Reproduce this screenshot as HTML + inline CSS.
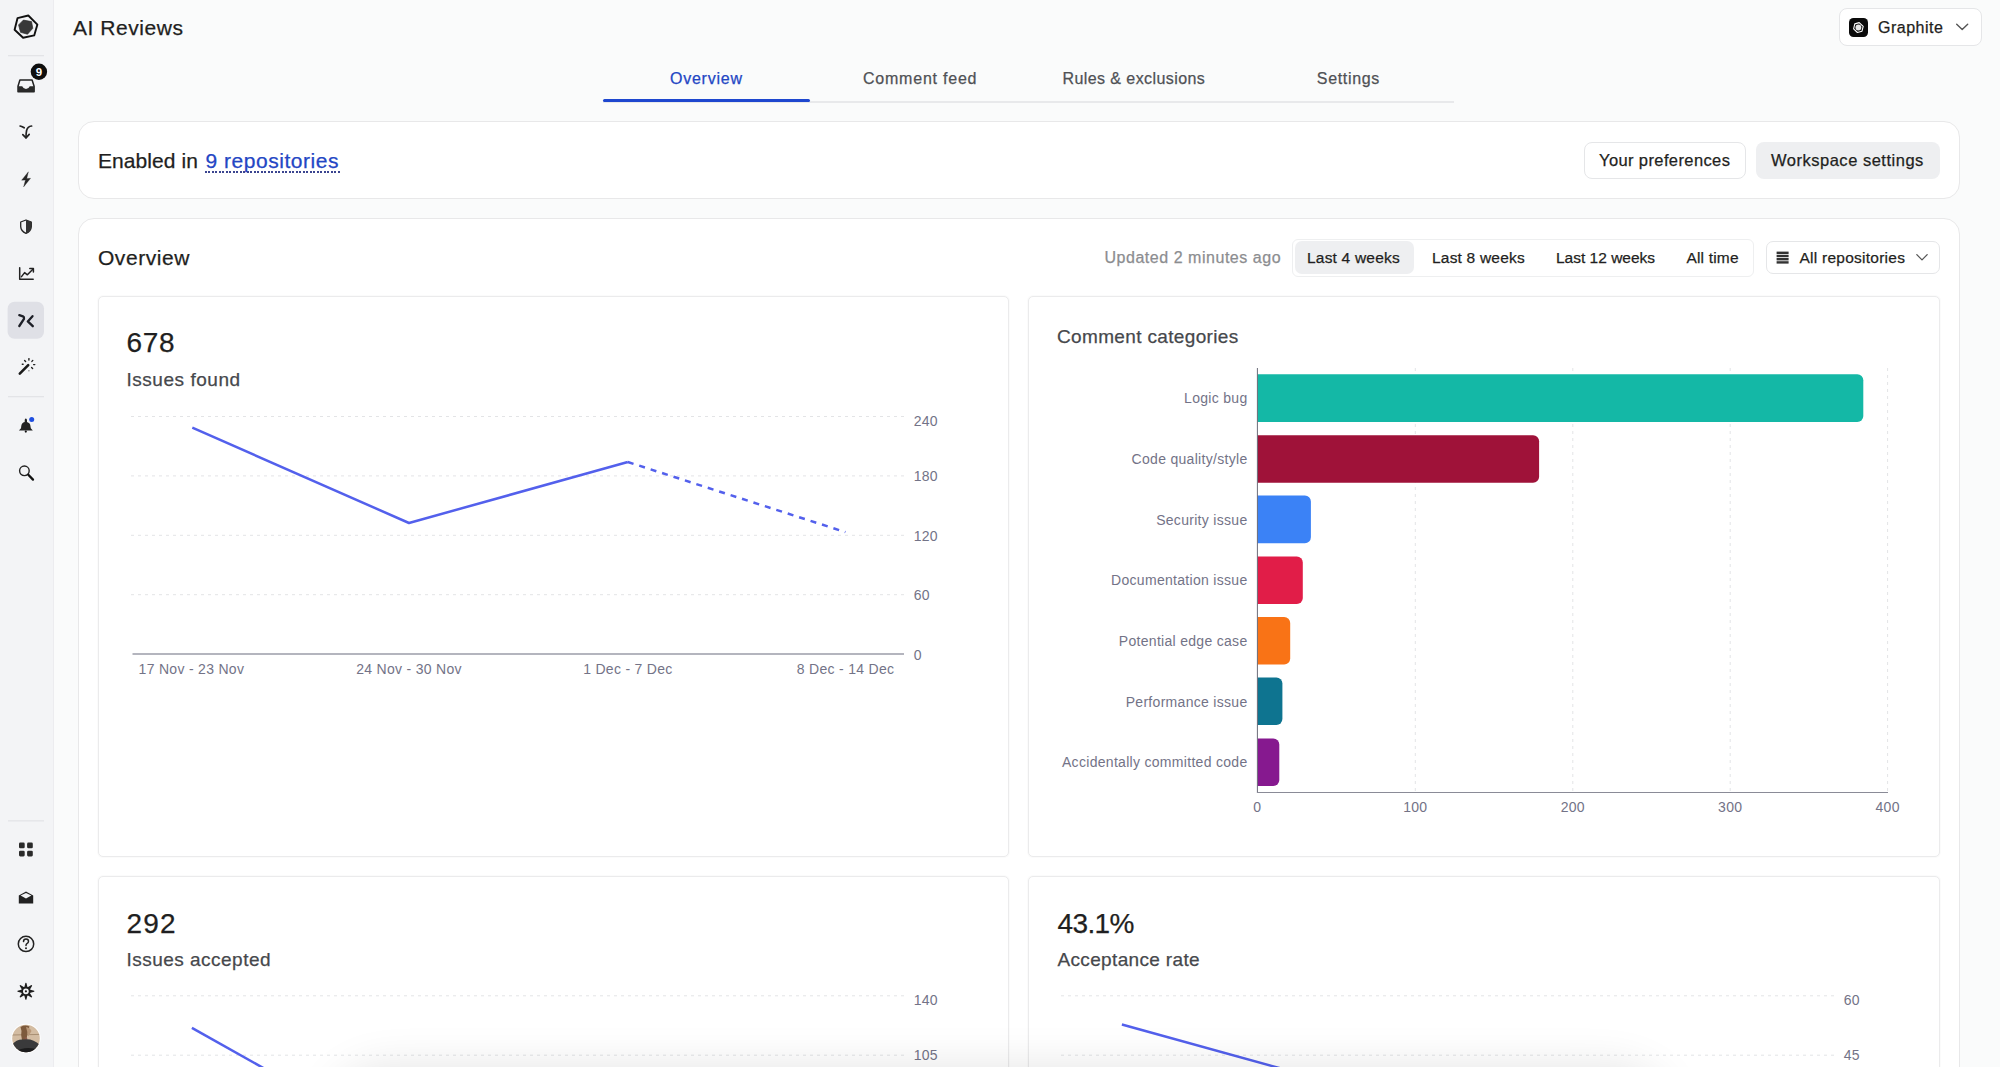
<!DOCTYPE html>
<html>
<head>
<meta charset="utf-8">
<style>
html,body{margin:0;padding:0;}
body{width:2000px;height:1067px;overflow:hidden;position:relative;background:#fafbfb;font-family:"Liberation Sans",sans-serif;color:#1f2124;}
.a{position:absolute;}
.t{position:absolute;white-space:nowrap;line-height:1;-webkit-text-stroke:0.25px currentColor;}
#side{left:0;top:0;width:53px;height:1067px;background:#f3f4f6;border-right:1.5px solid #ececef;}
.card{position:absolute;background:#fff;border:1px solid #e8e8e9;box-sizing:border-box;}
.btn{position:absolute;box-sizing:border-box;border-radius:8px;}
</style>
</head>
<body>
<!-- SIDEBAR -->
<div id="side" class="a"></div>
<svg class="a" style="left:0;top:0;" width="54" height="1067" viewBox="0 0 54 1067">
  <!-- logo -->
  <path d="M28.3 15.5 L37.4 24.6 L34.2 35.4 L23.1 37.8 L14.6 29.7 L17.5 18.2 Z" fill="none" stroke="#111" stroke-width="1.9" stroke-linejoin="round"/>
  <path d="M23.4 20.1 L31.5 21.6 L32.8 28.3 L27.5 34.2 L20.5 32.3 L18.6 24.9 Z" fill="#383838" stroke="#2e2e2e" stroke-width="0.7" stroke-linejoin="round"/>
  <!-- divider -->
  <rect x="8" y="55" width="36" height="1.3" fill="#e3e4e7"/>
  <!-- inbox -->
  <path d="M19.9 80 L32.1 80 L34.1 86.2 L34.1 91.7 L18 91.7 L18 86.2 Z" fill="none" stroke="#222" stroke-width="1.5" stroke-linejoin="round"/>
  <path d="M18 86.2 L22.2 86.2 Q23.5 89 26 89 Q28.5 89 29.8 86.2 L34.1 86.2 L34.1 91.7 L18 91.7 Z" fill="#2a2a2a"/>
  <!-- badge -->
  <circle cx="38.9" cy="71.7" r="9.3" fill="#f3f4f6"/>
  <circle cx="38.9" cy="71.7" r="8.2" fill="#0e0e0e"/>
  <text x="38.9" y="76" text-anchor="middle" font-family="Liberation Sans" font-weight="bold" font-size="11.5" fill="#fff">9</text>
  <!-- merge -->
  <path d="M20.1 126 Q22.5 126.6 24.2 127.8" fill="none" stroke="#222" stroke-width="1.7" stroke-linecap="round"/>
  <path d="M31.6 126 Q27.6 126.4 26.6 130.5 Q26 133 26 137.6" fill="none" stroke="#222" stroke-width="1.7" stroke-linecap="round"/>
  <path d="M22.8 134.6 L26 137.9 L29.2 134.4" fill="none" stroke="#222" stroke-width="1.7" stroke-linecap="round" stroke-linejoin="round"/>
  <!-- bolt -->
  <path d="M28.4 171.8 L21.6 180.2 L25.4 180.1 L23.6 186.9 L30.6 178.3 L26.8 178.4 Z" fill="#262626" stroke="#262626" stroke-width="0.3" stroke-linejoin="round"/>
  <!-- shield -->
  <path d="M26 220 L31.3 222 L31.3 226.6 Q31.1 231 26 233.3 Q20.9 231 20.7 226.6 L20.7 222 Z" fill="none" stroke="#262626" stroke-width="1.3" stroke-linejoin="round"/>
  <path d="M26 220 L31.3 222 L31.3 226.6 Q31.1 231 26 233.3 Z" fill="#333"/>
  <!-- chart -->
  <path d="M19.7 267.8 L19.7 279.2 L33.2 279.2" fill="none" stroke="#222" stroke-width="1.5" stroke-linecap="round" stroke-linejoin="round"/>
  <path d="M21.5 276.6 L24.6 272.6 L27.4 274.8 L32.6 269.4" fill="none" stroke="#222" stroke-width="1.5" stroke-linecap="round" stroke-linejoin="round"/>
  <path d="M29.8 268.4 L33.4 268.4 L33.4 272" fill="none" stroke="#222" stroke-width="1.5" stroke-linecap="round" stroke-linejoin="round"/>
  <!-- active -->
  <rect x="7.6" y="301.8" width="36.4" height="37" rx="7" fill="#dfe0e6"/>
  <path d="M19.3 315.1 L22.9 316.3 Q24.4 317.2 24 318.8 L19.3 326" fill="none" stroke="#1d1f27" stroke-width="2.3" stroke-linecap="round" stroke-linejoin="round"/>
  <path d="M32.5 316.2 L27.8 321.4 L32.8 326.2" fill="none" stroke="#1d1f27" stroke-width="2.3" stroke-linecap="round" stroke-linejoin="round"/>
  <!-- wand -->
  <path d="M19.8 373.6 L28.2 365.2" fill="none" stroke="#1a1a1a" stroke-width="2.6" stroke-linecap="round"/>
  <path d="M28.9 358.6 L28.9 360" stroke="#222" stroke-width="1.4" stroke-linecap="round"/>
  <path d="M24.6 360.4 L25.6 361.4" stroke="#222" stroke-width="1.4" stroke-linecap="round"/>
  <path d="M32.8 360.4 L31.9 361.4" stroke="#222" stroke-width="1.4" stroke-linecap="round"/>
  <path d="M22.3 364.3 L23.1 364.3" stroke="#222" stroke-width="1.4" stroke-linecap="round"/>
  <path d="M33.6 364.6 L34.8 364.6" stroke="#222" stroke-width="1.4" stroke-linecap="round"/>
  <path d="M31.6 367.4 L32.6 368.4" stroke="#222" stroke-width="1.4" stroke-linecap="round"/>
  <circle cx="28.9" cy="370.8" r="0.8" fill="#888"/>
  <!-- divider -->
  <rect x="8" y="396" width="36" height="1.3" fill="#e3e4e7"/>
  <!-- bell -->
  <path d="M25.8 418.6 Q27 418.8 27 420.6 L27 422 Q30.3 423 30.5 426.4 L30.8 428.3 L32.8 430.6 L18.9 430.6 L21 428.3 L21.2 426.4 Q21.5 422.6 24.7 422 L24.7 420.6 Q24.7 418.8 25.8 418.6 Z" fill="#222"/>
  <circle cx="25.8" cy="431.6" r="1.1" fill="#111"/>
  <circle cx="31.7" cy="419.6" r="3.6" fill="#f3f4f6"/>
  <circle cx="31.7" cy="419.6" r="2.5" fill="#1f4fe0"/>
  <!-- search -->
  <circle cx="24.4" cy="470.8" r="4.8" fill="none" stroke="#222" stroke-width="1.4"/>
  <path d="M28.3 474.7 L33 479.6" stroke="#111" stroke-width="2.3" stroke-linecap="round"/>
  <!-- divider bottom -->
  <rect x="8" y="820.2" width="36" height="1.3" fill="#e3e4e7"/>
  <!-- grid -->
  <rect x="19" y="842.6" width="5.7" height="5.6" rx="1.3" fill="#2a2a2a"/>
  <rect x="27.1" y="842.6" width="5.7" height="5.6" rx="1.3" fill="#2a2a2a"/>
  <rect x="19" y="850.8" width="5.7" height="5.6" rx="1.3" fill="#2a2a2a"/>
  <rect x="27.1" y="850.8" width="5.7" height="5.6" rx="1.3" fill="#2a2a2a"/>
  <!-- mail open -->
  <path d="M18.8 895.4 L26 891.4 L33.2 895.4 L33.2 903.4 L18.8 903.4 Z" fill="#222"/>
  <path d="M20.6 895.6 L26 892.9 L31.4 895.6 L26 898.6 Z" fill="#f3f4f6"/>
  <!-- help -->
  <circle cx="26" cy="943.9" r="7.7" fill="none" stroke="#222" stroke-width="1.5"/>
  <path d="M23.5 941.6 Q23.6 939 26 939 Q28.5 939 28.5 941.3 Q28.5 942.8 26.9 943.6 Q26 944.1 26 945.4" fill="none" stroke="#222" stroke-width="1.5" stroke-linecap="round"/>
  <circle cx="26" cy="948.2" r="1" fill="#222"/>
  <!-- gear -->
  <g transform="translate(25.9 991.3)" fill="#1e1e1e">
    <path d="M-1.7 -3.6 L-0.55 -8.3 Q0 -8.7 0.55 -8.3 L1.7 -3.6 Z" transform="rotate(0)"/><path d="M-1.7 -3.6 L-0.55 -8.3 Q0 -8.7 0.55 -8.3 L1.7 -3.6 Z" transform="rotate(45)"/><path d="M-1.7 -3.6 L-0.55 -8.3 Q0 -8.7 0.55 -8.3 L1.7 -3.6 Z" transform="rotate(90)"/><path d="M-1.7 -3.6 L-0.55 -8.3 Q0 -8.7 0.55 -8.3 L1.7 -3.6 Z" transform="rotate(135)"/><path d="M-1.7 -3.6 L-0.55 -8.3 Q0 -8.7 0.55 -8.3 L1.7 -3.6 Z" transform="rotate(180)"/><path d="M-1.7 -3.6 L-0.55 -8.3 Q0 -8.7 0.55 -8.3 L1.7 -3.6 Z" transform="rotate(225)"/><path d="M-1.7 -3.6 L-0.55 -8.3 Q0 -8.7 0.55 -8.3 L1.7 -3.6 Z" transform="rotate(270)"/><path d="M-1.7 -3.6 L-0.55 -8.3 Q0 -8.7 0.55 -8.3 L1.7 -3.6 Z" transform="rotate(315)"/>
    <circle r="3.75" fill="none" stroke="#1e1e1e" stroke-width="1.7"/>
    <circle r="1.1"/>
  </g>
  <!-- avatar -->
  <defs>
    <clipPath id="avc"><circle cx="26" cy="1038.5" r="13.8"/></clipPath>
    <linearGradient id="avbg" x1="0" y1="0" x2="1" y2="1">
      <stop offset="0" stop-color="#d2b48e"/>
      <stop offset="1" stop-color="#a98461"/>
    </linearGradient>
  </defs>
  <circle cx="26" cy="1038.5" r="14.7" fill="#fff"/>
  <g clip-path="url(#avc)">
    <rect x="12" y="1024" width="28" height="29" fill="#d3bca2"/>
    <path d="M12 1035 L40 1034.4" stroke="#a48a6e" stroke-width="0.9"/>
    <path d="M20.5 1027 Q25 1024.5 29.5 1026.5 Q28 1030 27.5 1034 Q27 1038 25.5 1041 L22 1040 Q20.5 1035 21.5 1031 Z" fill="#7d5a3c"/>
    <path d="M26 1027 Q30 1027.5 31.5 1031 Q30 1034 28 1036.5 Q27.5 1032 26 1027 Z" fill="#b99878"/>
    <path d="M24.5 1037 Q26.5 1036.5 27.5 1039 L25 1041 Z" fill="#8a5a4a"/>
    <path d="M10 1048 Q15 1038.5 24 1039.5 Q33 1038 41 1046 L41 1054 L10 1054 Z" fill="#3a3a3b"/>
    <path d="M14 1052 Q26 1045 39 1050 L39 1054 L14 1054 Z" fill="#1c1c1d"/>
  </g>
</svg>

<!-- TITLE -->
<div class="t" style="left:73px;top:16.7px;font-size:21px;letter-spacing:0.55px;color:#1f1f21;">AI Reviews</div>

<!-- GRAPHITE DROPDOWN -->
<div class="btn" style="left:1839px;top:8px;width:143px;height:38px;border:1px solid #e5e6e8;background:#fff;"></div>
<svg class="a" style="left:1849px;top:17.5px;" width="19" height="19" viewBox="0 0 19 19">
  <rect x="0" y="0" width="19" height="19" rx="4.5" fill="#0b0b0b"/>
  <path d="M10.2 4.6 L14.2 8.3 L13 13.2 L8.4 14.5 L4.6 10.8 L5.8 5.9 Z" fill="none" stroke="#fff" stroke-width="1.1" stroke-linejoin="round"/>
  <circle cx="9.4" cy="9.5" r="2.9" fill="#e8e8e8"/>
</svg>
<svg class="a" style="left:1954px;top:22px;" width="16" height="10" viewBox="0 0 16 10">
  <path d="M2.7 2.3 L8.2 7.6 L13.7 2.3" fill="none" stroke="#555" stroke-width="1.4" stroke-linecap="round" stroke-linejoin="round"/>
</svg>
<div class="t" style="left:1878px;top:20.2px;font-size:16px;letter-spacing:0.5px;color:#1f1f21;">Graphite</div>

<!-- TABS -->
<div class="a" style="left:603px;top:101px;width:851px;height:2px;background:#e8e9eb;"></div>
<div class="a" style="left:603px;top:99px;width:207px;height:3px;border-radius:2px;background:#1e47cf;"></div>
<div class="t" style="left:670px;top:71.2px;font-size:16px;letter-spacing:0.75px;color:#2346c4;">Overview</div>
<div class="t" style="left:863px;top:71.2px;font-size:16px;letter-spacing:0.78px;color:#4f5155;">Comment feed</div>
<div class="t" style="left:1062.5px;top:71.2px;font-size:16px;letter-spacing:0.42px;color:#4f5155;">Rules &amp; exclusions</div>
<div class="t" style="left:1316.8px;top:71.2px;font-size:16px;letter-spacing:0.67px;color:#4f5155;">Settings</div>

<!-- ENABLED CARD -->
<div class="card" style="left:78px;top:121px;width:1882px;height:78px;border-radius:16px;"></div>
<div class="t" style="left:98px;top:150.1px;font-size:21px;letter-spacing:0.08px;color:#1f1f21;">Enabled in</div>
<div class="t" style="left:205.5px;top:150.1px;font-size:21px;letter-spacing:0.53px;color:#2346c4;">9 repositories</div>
<div class="a" style="left:205px;top:171.4px;width:135px;height:1.7px;background:repeating-linear-gradient(90deg,#3b4590 0 1.7px,transparent 1.7px 3.5px);"></div>
<div class="btn" style="left:1584px;top:141.5px;width:162px;height:37px;border:1px solid #e5e6e8;background:#fff;"></div>
<div class="t" style="left:1599px;top:152.4px;font-size:16.5px;letter-spacing:0.39px;color:#1f1f21;">Your preferences</div>
<div class="btn" style="left:1756px;top:142px;width:184px;height:36.5px;background:#eeeff1;"></div>
<div class="t" style="left:1771px;top:152.4px;font-size:16.5px;letter-spacing:0.51px;color:#1f1f21;">Workspace settings</div>

<!-- OVERVIEW CARD -->
<div class="card" style="left:78px;top:218px;width:1882px;height:900px;border-radius:16px;"></div>
<div class="t" style="left:98px;top:246.8px;font-size:21px;letter-spacing:0.54px;color:#1f1f21;">Overview</div>
<div class="t" style="left:1104.5px;top:249.7px;font-size:16px;letter-spacing:0.53px;color:#8c8d90;">Updated 2 minutes ago</div>
<div class="btn" style="left:1291.5px;top:238.5px;width:462.5px;height:38px;border-radius:6px;border:1px solid #eeeff0;background:#fff;"></div>
<div class="btn" style="left:1294.5px;top:241px;width:119.5px;height:33px;border-radius:7px;background:#eeeff1;"></div>
<div class="t" style="left:1307px;top:249.7px;font-size:15.5px;letter-spacing:0.2px;color:#1f1f21;">Last 4 weeks</div>
<div class="t" style="left:1432px;top:249.7px;font-size:15.5px;letter-spacing:0.2px;color:#1f1f21;">Last 8 weeks</div>
<div class="t" style="left:1556px;top:249.7px;font-size:15.5px;letter-spacing:0px;color:#1f1f21;">Last 12 weeks</div>
<div class="t" style="left:1686.5px;top:249.7px;font-size:15.5px;letter-spacing:0.17px;color:#1f1f21;">All time</div>
<div class="btn" style="left:1765.5px;top:241px;width:174px;height:33px;border-radius:7px;border:1px solid #e5e6e8;background:#fff;"></div>
<div class="t" style="left:1799.5px;top:249.6px;font-size:15.5px;letter-spacing:0.25px;color:#1f1f21;">All repositories</div>
<svg class="a" style="left:1775px;top:250px;" width="16" height="16" viewBox="0 0 16 16">
  <rect x="1.6" y="1.6" width="12" height="2.4" fill="#333"/>
  <rect x="1.6" y="4.8" width="12" height="2.4" fill="#333"/>
  <rect x="1.6" y="8" width="12" height="2.4" fill="#333"/>
  <rect x="1.6" y="11.2" width="12" height="2.4" fill="#333"/>
</svg>
<svg class="a" style="left:1914px;top:251px;" width="16" height="12" viewBox="0 0 16 12">
  <path d="M2.8 3.6 L8 8.9 L13.2 3.6" fill="none" stroke="#555" stroke-width="1.3" stroke-linecap="round" stroke-linejoin="round"/>
</svg>

<!-- CHART CARDS -->
<div class="card" style="left:98px;top:296px;width:911px;height:561px;border-radius:5px;border-color:#ebebec;box-shadow:0 0 1px 1px rgba(0,0,0,0.02);"></div>
<div class="card" style="left:1028px;top:296px;width:912px;height:561px;border-radius:5px;border-color:#ebebec;box-shadow:0 0 1px 1px rgba(0,0,0,0.02);"></div>
<div class="card" style="left:98px;top:876px;width:911px;height:400px;border-radius:5px;border-color:#ebebec;box-shadow:0 0 1px 1px rgba(0,0,0,0.02);"></div>
<div class="card" style="left:1028px;top:876px;width:912px;height:400px;border-radius:5px;border-color:#ebebec;box-shadow:0 0 1px 1px rgba(0,0,0,0.02);"></div>

<div class="t" style="left:126.5px;top:329.3px;font-size:28px;letter-spacing:0.65px;color:#1f1f21;">678</div>
<div class="t" style="left:126.5px;top:369.6px;font-size:19px;letter-spacing:0.53px;color:#46484c;">Issues found</div>
<div class="t" style="left:1057px;top:327.3px;font-size:19px;letter-spacing:0.35px;color:#46484c;">Comment categories</div>
<div class="t" style="left:126.5px;top:910px;font-size:28px;letter-spacing:1.2px;color:#1f1f21;">292</div>
<div class="t" style="left:126.5px;top:949.6px;font-size:19px;letter-spacing:0.48px;color:#46484c;">Issues accepted</div>
<div class="t" style="left:1057.5px;top:910px;font-size:28px;letter-spacing:-0.6px;color:#1f1f21;">43.1%</div>
<div class="t" style="left:1057.5px;top:949.6px;font-size:19px;letter-spacing:0.34px;color:#46484c;">Acceptance rate</div>

<!-- CHARTS OVERLAY -->
<svg class="a" style="left:0;top:0;letter-spacing:0.3px;" width="2000" height="1067" viewBox="0 0 2000 1067" font-family="Liberation Sans" font-size="14">
  <!-- Line chart A -->
  <g stroke="#e3e4e6" stroke-width="1" stroke-dasharray="3 4" fill="none">
    <line x1="131" y1="416.5" x2="904" y2="416.5"/>
    <line x1="131" y1="475.9" x2="904" y2="475.9"/>
    <line x1="131" y1="535.3" x2="904" y2="535.3"/>
    <line x1="131" y1="594.7" x2="904" y2="594.7"/>
  </g>
  <line x1="132.5" y1="654.1" x2="904" y2="654.1" stroke="#9b9ca8" stroke-width="1.5"/>
  <g fill="#737387">
    <text x="913.7" y="425.5">240</text>
    <text x="913.7" y="481">180</text>
    <text x="913.7" y="540.8">120</text>
    <text x="913.7" y="600.3">60</text>
    <text x="913.7" y="660">0</text>
  </g>
  <g fill="#737387" text-anchor="middle">
    <text x="191.4" y="674.2">17 Nov - 23 Nov</text>
    <text x="409" y="674.2">24 Nov - 30 Nov</text>
    <text x="627.9" y="674.2">1 Dec - 7 Dec</text>
    <text x="845.6" y="674.2">8 Dec - 14 Dec</text>
  </g>
  <polyline points="192.3,427.6 409,523 627.8,462" fill="none" stroke="#5360ec" stroke-width="2.5" stroke-linejoin="round"/>
  <polyline points="627.8,462 845.4,532.1" fill="none" stroke="#5360ec" stroke-width="2.5" stroke-dasharray="6 6"/>

  <!-- Bar chart B -->
  <g stroke="#e3e4e6" stroke-width="1" stroke-dasharray="3 4" fill="none">
    <line x1="1415.3" y1="368" x2="1415.3" y2="792.5"/>
    <line x1="1572.8" y1="368" x2="1572.8" y2="792.5"/>
    <line x1="1730.2" y1="368" x2="1730.2" y2="792.5"/>
    <line x1="1887.6" y1="368" x2="1887.6" y2="792.5"/>
  </g>
  <path d="M1257.4,374.3 H1857.3 A6,6 0 0 1 1863.3,380.3 V415.9 A6,6 0 0 1 1857.3,421.9 H1257.4 Z" fill="#14b8a6"/>
  <path d="M1257.4,435.2 H1533.1 A6,6 0 0 1 1539.1,441.2 V476.8 A6,6 0 0 1 1533.1,482.8 H1257.4 Z" fill="#9f1239"/>
  <path d="M1257.4,495.6 H1304.9 A6,6 0 0 1 1310.9,501.6 V537.2 A6,6 0 0 1 1304.9,543.2 H1257.4 Z" fill="#3b82f6"/>
  <path d="M1257.4,556.4 H1296.8 A6,6 0 0 1 1302.8,562.4 V598 A6,6 0 0 1 1296.8,604 H1257.4 Z" fill="#e11d48"/>
  <path d="M1257.4,617 H1284.2 A6,6 0 0 1 1290.2,623 V658.6 A6,6 0 0 1 1284.2,664.6 H1257.4 Z" fill="#f97316"/>
  <path d="M1257.4,677.5 H1276.4 A6,6 0 0 1 1282.4,683.5 V719.1 A6,6 0 0 1 1276.4,725.1 H1257.4 Z" fill="#0e7490"/>
  <path d="M1257.4,738.4 H1273.3 A6,6 0 0 1 1279.3,744.4 V780 A6,6 0 0 1 1273.3,786 H1257.4 Z" fill="#86198f"/>
  <line x1="1257.4" y1="368" x2="1257.4" y2="793" stroke="#6b6c78" stroke-width="1"/>
  <line x1="1257" y1="792.5" x2="1888" y2="792.5" stroke="#8a8b97" stroke-width="1.2"/>
  <g fill="#737387" text-anchor="end">
    <text x="1247.5" y="403.4">Logic bug</text>
    <text x="1247.5" y="464">Code quality/style</text>
    <text x="1247.5" y="524.6">Security issue</text>
    <text x="1247.5" y="585.4">Documentation issue</text>
    <text x="1247.5" y="646">Potential edge case</text>
    <text x="1247.5" y="706.5">Performance issue</text>
    <text x="1247.5" y="767.4">Accidentally committed code</text>
  </g>
  <g fill="#737387" text-anchor="middle">
    <text x="1257.2" y="812">0</text>
    <text x="1415.3" y="812">100</text>
    <text x="1572.8" y="812">200</text>
    <text x="1730.2" y="812">300</text>
    <text x="1887.6" y="812">400</text>
  </g>

  <!-- Line chart C -->
  <g stroke="#e3e4e6" stroke-width="1" stroke-dasharray="3 4" fill="none">
    <line x1="131" y1="995.8" x2="904" y2="995.8"/>
    <line x1="131" y1="1055.2" x2="904" y2="1055.2"/>
    <line x1="1061" y1="995.8" x2="1834" y2="995.8"/>
    <line x1="1061" y1="1055.2" x2="1834" y2="1055.2"/>
  </g>
  <g fill="#737387">
    <text x="913.7" y="1005">140</text>
    <text x="913.7" y="1060.2">105</text>
    <text x="1843.7" y="1005">60</text>
    <text x="1843.7" y="1060.2">45</text>
  </g>
  <polyline points="191.9,1027.8 409,1150" fill="none" stroke="#5360ec" stroke-width="2.5"/>
  <polyline points="1121.9,1024.5 1339,1084.5" fill="none" stroke="#5360ec" stroke-width="2.5"/>
</svg>

<!-- bottom shadow -->
<div class="a" style="left:330px;top:1075px;width:1340px;height:120px;border-radius:60px;background:#fff;box-shadow:0 -2px 45px 6px rgba(0,0,0,0.11);"></div>
</body>
</html>
